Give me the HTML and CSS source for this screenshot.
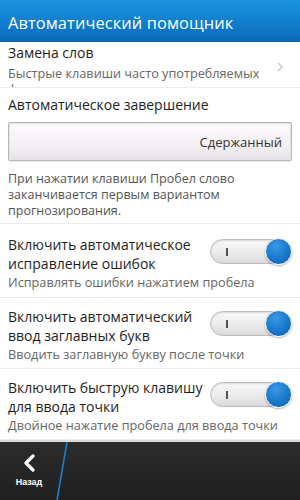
FILE: index.html
```html
<!DOCTYPE html>
<html lang="ru">
<head>
<meta charset="utf-8">
<link rel="stylesheet" href="styles.css">
</head>
<body>
<div class="screen">
  <header class="header">Автоматический помощник</header>
  <main class="content">
    <div class="row-link">
      <div class="link-text">
        <div class="title">Замена слов</div>
        <div class="sub">Быстрые клавиши часто употребляемых фраз</div>
      </div>
      <svg class="chev" width="8" height="12" viewBox="0 0 8 12"><path d="M2 2 L6 6 L2 10" fill="none" stroke="#c8c8c8" stroke-width="1.5"/></svg>
    </div>
    <div class="section">
      <div class="title">Автоматическое завершение</div>
      <div class="dropdown">Сдержанный</div>
      <div class="desc">При нажатии клавиши Пробел слово заканчивается первым вариантом прогнозирования.</div>
    </div>
    <div class="toggle-row first">
      <div class="t-head">
        <div class="title">Включить автоматическое исправление ошибок</div>
        <div class="toggle"><span class="mark"></span><span class="knob"></span></div>
      </div>
      <div class="sub">Исправлять ошибки нажатием пробела</div>
    </div>
    <div class="toggle-row">
      <div class="t-head">
        <div class="title">Включить автоматический ввод заглавных букв</div>
        <div class="toggle"><span class="mark"></span><span class="knob"></span></div>
      </div>
      <div class="sub">Вводить заглавную букву после точки</div>
    </div>
    <div class="toggle-row">
      <div class="t-head">
        <div class="title">Включить быструю клавишу для ввода точки</div>
        <div class="toggle"><span class="mark"></span><span class="knob"></span></div>
      </div>
      <div class="sub">Двойное нажатие пробела для ввода точки</div>
    </div>
  </main>
  <footer class="footer">
    <div class="back">
      <svg width="14" height="18" viewBox="0 0 14 18"><path d="M11 2 L4 9 L11 16" fill="none" stroke="#fff" stroke-width="3.2" stroke-linecap="round" stroke-linejoin="round"/></svg>
      <span class="back-label">Назад</span>
    </div>
    <svg class="slash" width="14" height="58" viewBox="0 0 14 58"><line x1="12" y1="0" x2="2" y2="58" stroke="#1d7fcc" stroke-width="1.6"/></svg>
  </footer>
</div>
</body>
</html>
```

FILE: styles.css
```css
* { box-sizing: border-box; }
html, body { margin: 0; padding: 0; }
body {
  width: 300px;
  height: 500px;
  overflow: hidden;
  font-family: "Open Sans", "Noto Sans", sans-serif;
  background: #fff;
}
.screen {
  width: 300px;
  height: 500px;
  display: flex;
  flex-direction: column;
}
.header {
  height: 42px;
  flex: none;
  background: linear-gradient(to bottom, #1b92dc 0%, #1180cf 50%, #0a68b5 100%);
  color: #fff;
  font-size: 16.4px;
  line-height: 20px;
  padding: 13px 0 0 8px;
  letter-spacing: 0.1px;
}
.content {
  flex: 1;
  overflow: hidden;
  background: #fff;
}
.title {
  font-size: 14px;
  line-height: 19px;
  color: #1e1e1e;
}
.sub {
  font-size: 12.7px;
  line-height: 16px;
  color: #666;
}
.row-link {
  height: 46px;
  overflow: hidden;
  display: flex;
  align-items: flex-start;
  padding: 0 16px 0 8px;
  border-bottom: 1px solid #ececec;
}
.link-text { flex: 1; min-width: 0; padding-top: 1px; }
.link-text .sub { padding-top: 3px; }
.chev { margin-top: 19px; flex: none; }
.section {
  padding: 7px 8px 0 8px;
  height: 136px;
  border-bottom: 1px solid #ececec;
}
.dropdown {
  margin-top: 8px;
  height: 39px;
  border: 1px solid #b9b7ba;
  border-radius: 2px;
  box-shadow: inset 0 0 0 1px #e4e2e5, 0 1px 1px rgba(0,0,0,0.08);
  background: linear-gradient(to bottom, #fdfbfd 0%, #f2f0f3 60%, #e6e4e7 100%);
  font-size: 13px;
  color: #333;
  text-align: right;
  padding: 10px 9px 0 0;
}
.desc {
  margin-top: 10px;
  font-size: 12.5px;
  line-height: 16px;
  color: #555;
}
.toggle-row {
  height: 71px;
  padding: 9px 8px 0 8px;
  border-bottom: 1px solid #ececec;
}
.toggle-row.first {
  height: 74px;
  padding-top: 11px;
}
.t-head {
  display: flex;
  align-items: flex-start;
  gap: 6px;
}
.t-head .title { flex: 1; }
.toggle-row .sub { margin-top: 1px; }
.toggle {
  flex: none;
  position: relative;
  width: 82px;
  height: 25px;
  margin-top: 4px;
  border-radius: 13px;
  border: 1px solid #bcbcbc;
  background: linear-gradient(to bottom, #f8f8f8 0%, #ebebeb 55%, #dadada 100%);
  box-shadow: inset 0 1px 2px rgba(0,0,0,0.12);
}
.mark {
  position: absolute;
  left: 15px;
  top: 8px;
  width: 1.5px;
  height: 8px;
  background: #555;
}
.knob {
  position: absolute;
  right: -1px;
  top: -2px;
  width: 27px;
  height: 27px;
  border-radius: 50%;
  border: 1.5px solid #f4f4f4;
  background: radial-gradient(circle at 40% 30%, #3a98e0 0%, #1978cc 55%, #0c5fae 100%);
  box-shadow: 0 1px 2px rgba(0,0,0,0.3);
}
.footer {
  height: 60px;
  flex: none;
  background: linear-gradient(to bottom, #2b2b2b 0%, #202020 100%);
  border-top: 2px solid #dcdcdc;
  display: flex;
  align-items: stretch;
}
.back {
  width: 55px;
  display: flex;
  flex-direction: column;
  align-items: center;
  padding-top: 12px;
}
.back svg { margin-left: 2px; }
.back-label {
  font-family: "Liberation Sans", sans-serif;
  font-weight: bold;
  font-size: 9px;
  color: #fff;
  margin-top: 5px;
  margin-left: 3px;
}
.slash { flex: none; height: 58px; }
```
